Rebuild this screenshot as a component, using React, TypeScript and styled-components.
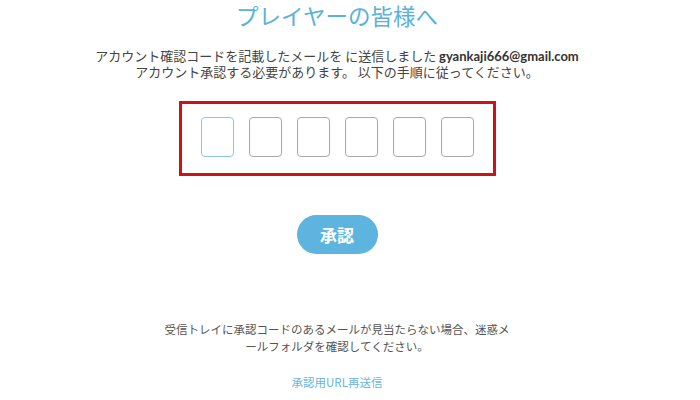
import React from "react";
import styled, { createGlobalStyle } from "styled-components";

const GlobalStyle = createGlobalStyle`
  html, body {
    margin: 0;
    padding: 0;
    background: #ffffff;
  }
  body {
    font-family: "Noto Sans CJK JP", "Noto Sans", sans-serif;
    color: #444;
  }
`;

const Page = styled.main`
  width: 674px;
  display: flex;
  flex-direction: column;
  align-items: center;
`;

const Title = styled.h1`
  margin: 0;
  font-size: 22.5px;
  font-weight: 400;
  line-height: 30px;
  color: #5ab2db;
  letter-spacing: 0;
`;

const Lead = styled.p`
  margin: 18px 0 0;
  font-size: 13px;
  line-height: 16px;
  color: #444;
  text-align: center;
`;

const Email = styled.b`
  font-family: "Lato", "Noto Sans", sans-serif;
  font-weight: 700;
  color: #333;
`;

const CodeFrame = styled.div`
  margin-top: 21px;
  box-sizing: border-box;
  width: 317px;
  height: 75px;
  border: 3px solid #cc1418;
  padding: 13px 19px 16px;
  display: flex;
  gap: 15px;
`;

const CodeInput = styled.input<{ $active?: boolean }>`
  box-sizing: border-box;
  width: 33px;
  height: 40px;
  margin: 0;
  padding: 0;
  border: 1px solid ${(p) => (p.$active ? "#86c8e6" : "#a8a8a8")};
  border-radius: 4px;
  background: #fff;
  outline: none;
  text-align: center;
  font-size: 18px;
`;

const ConfirmButton = styled.button`
  margin-top: 39px;
  width: 81px;
  height: 39px;
  border: none;
  border-radius: 20px;
  background: #5db5df;
  color: #fff;
  font-family: "Noto Sans CJK JP", sans-serif;
  font-size: 17px;
  font-weight: 700;
  cursor: pointer;
  padding: 0;
`;

const Note = styled.p`
  margin: 67px 0 0;
  width: 350px;
  font-size: 11.5px;
  line-height: 17px;
  color: #555;
  text-align: center;
  line-break: loose;
`;

const ResendLink = styled.a`
  margin-top: 19px;
  font-size: 11.5px;
  line-height: 17px;
  color: #6bb4dd;
  text-decoration: none;
  cursor: pointer;
`;

export default function App() {
  const cells = [0, 1, 2, 3, 4, 5];
  return (
    <>
      <GlobalStyle />
      <Page>
        <Title>プレイヤーの皆様へ</Title>
        <Lead>
          アカウント確認コードを記載したメールを に送信しました <Email>gyankaji666@gmail.com</Email>
          <br />
          アカウント承認する必要があります。 以下の手順に従ってください。
        </Lead>
        <CodeFrame>
          {cells.map((i) => (
            <CodeInput key={i} $active={i === 0} maxLength={1} />
          ))}
        </CodeFrame>
        <ConfirmButton>承認</ConfirmButton>
        <Note>
          受信トレイに承認コードのあるメールが見当たらない場合、迷惑メールフォルダを確認してください。
        </Note>
        <ResendLink>承認用URL再送信</ResendLink>
      </Page>
    </>
  );
}
